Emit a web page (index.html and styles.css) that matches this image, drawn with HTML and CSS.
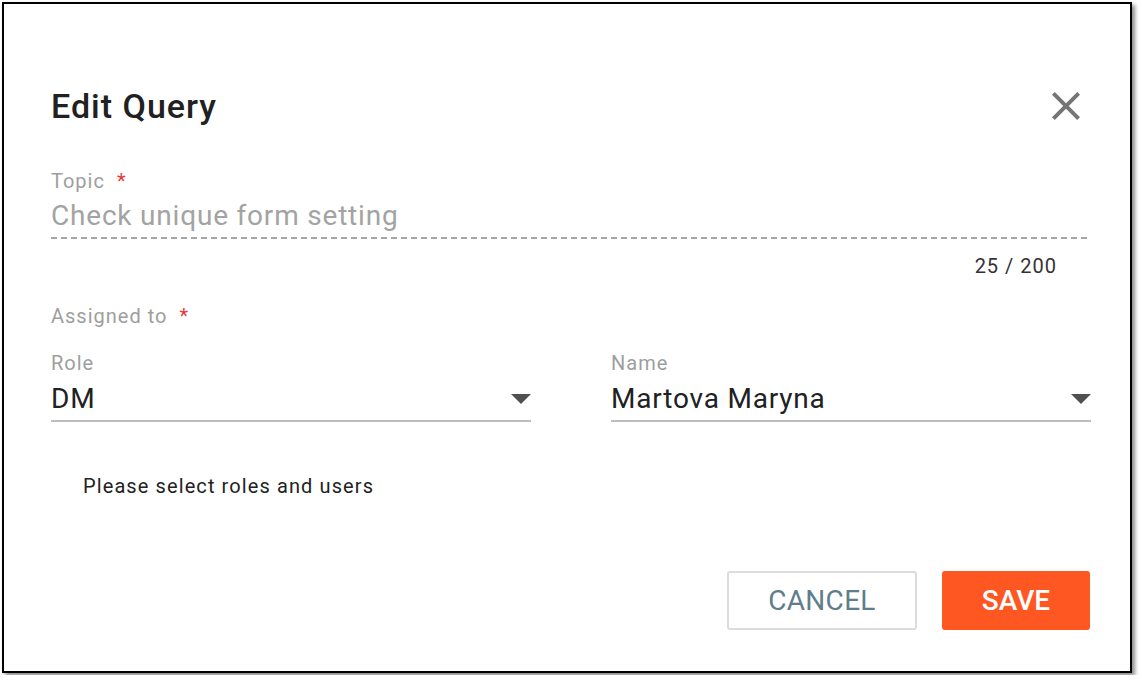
FILE: index.html
```html
<!DOCTYPE html>
<html lang="en">
<head>
<meta charset="utf-8">
<title>Edit Query</title>
<link rel="stylesheet" href="styles.css">
</head>
<body>
<div class="dialog">
  <div class="header">
    <h1 class="title">Edit Query</h1>
    <button class="close" aria-label="Close">
      <svg viewBox="0 0 24 24" width="48" height="48"><path d="M19 6.41L17.59 5 12 10.59 6.41 5 5 6.41 10.59 12 5 17.59 6.41 19 12 13.41 17.59 19 19 17.59 13.41 12z"/></svg>
    </button>
  </div>

  <div class="field topic">
    <div class="label">Topic <span class="req">*</span></div>
    <div class="input dashed">Check unique form setting</div>
    <div class="counter">25 / 200</div>
  </div>

  <div class="label assigned">Assigned to <span class="req">*</span></div>

  <div class="selects">
    <div class="select">
      <div class="label">Role</div>
      <div class="value"><span>DM</span><span class="arrow"></span></div>
    </div>
    <div class="select">
      <div class="label">Name</div>
      <div class="value"><span>Martova Maryna</span><span class="arrow"></span></div>
    </div>
  </div>

  <p class="hint">Please select roles and users</p>

  <div class="actions">
    <button class="btn cancel">CANCEL</button>
    <button class="btn save">SAVE</button>
  </div>
</div>
</body>
</html>
```
FILE: styles.css
```css
html, body {
  margin: 0;
  padding: 0;
  background: #fff;
}
body {
  font-family: Roboto, "Liberation Sans", Arial, sans-serif;
  padding: 2px;
}
.dialog {
  box-sizing: border-box;
  width: 1130px;
  height: 671px;
  border: 2px solid #000;
  box-shadow: 3px 3px 4px rgba(0,0,0,0.45);
  background: #fff;
  padding: 82px 40px 0 47px;
  display: flex;
  flex-direction: column;
}
.header {
  display: flex;
  align-items: center;
  justify-content: space-between;
  height: 40px;
}
.title {
  margin: 0;
  font-size: 34px;
  line-height: 40px;
  font-weight: 500;
  color: #212121;
  letter-spacing: 1px;
}
.close {
  border: 0;
  background: none;
  padding: 0;
  width: 48px;
  height: 48px;
  cursor: pointer;
}
.close svg {
  display: block;
  fill: #757575;
}
.label {
  font-size: 20px;
  line-height: 24px;
  color: #9e9e9e;
  letter-spacing: 1px;
}
.req {
  color: #e53935;
  margin-left: 6px;
}
.topic {
  margin-top: 43px;
}
.input {
  font-size: 28px;
  line-height: 32px;
  color: #a3a3a3;
  letter-spacing: 0.8px;
  margin-top: 7px;
}
.dashed {
  background-image: repeating-linear-gradient(to right, #a6a6a6 0 6px, transparent 6px 10px);
  background-size: 100% 2px;
  background-repeat: no-repeat;
  background-position: left bottom;
  padding-bottom: 7px;
}
.counter {
  text-align: right;
  font-size: 20px;
  line-height: 22px;
  color: #333;
  margin-top: 16px;
  padding-right: 33px;
  letter-spacing: 1px;
}
.assigned {
  margin-top: 27px;
}
.selects {
  display: grid;
  grid-template-columns: 480px 480px;
  column-gap: 80px;
  margin-top: 23px;
}
.value {
  display: flex;
  align-items: center;
  justify-content: space-between;
  font-size: 28px;
  line-height: 32px;
  color: #212121;
  letter-spacing: 0.8px;
  margin-top: 8px;
  padding-bottom: 5px;
  border-bottom: 2px solid #bdbdbd;
}
.arrow {
  width: 0;
  height: 0;
  border-left: 10px solid transparent;
  border-right: 10px solid transparent;
  border-top: 10px solid #505050;
}
.hint {
  margin: 52px 0 0 32px;
  font-size: 20px;
  line-height: 24px;
  color: #222;
  letter-spacing: 1.1px;
}
.actions {
  display: flex;
  justify-content: flex-end;
  gap: 25px;
  margin-top: 73px;
}
.btn {
  box-sizing: border-box;
  height: 59px;
  font-family: Roboto, "Liberation Sans", Arial, sans-serif;
  font-size: 28px;
  border-radius: 3px;
  cursor: pointer;
}
.cancel {
  width: 190px;
  background: #fff;
  border: 2px solid #dcdcdc;
  color: #607d8b;
  letter-spacing: 0.3px;
}
.save {
  width: 148px;
  background: #ff5722;
  border: 0;
  color: #fff;
  font-weight: 500;
}
```
